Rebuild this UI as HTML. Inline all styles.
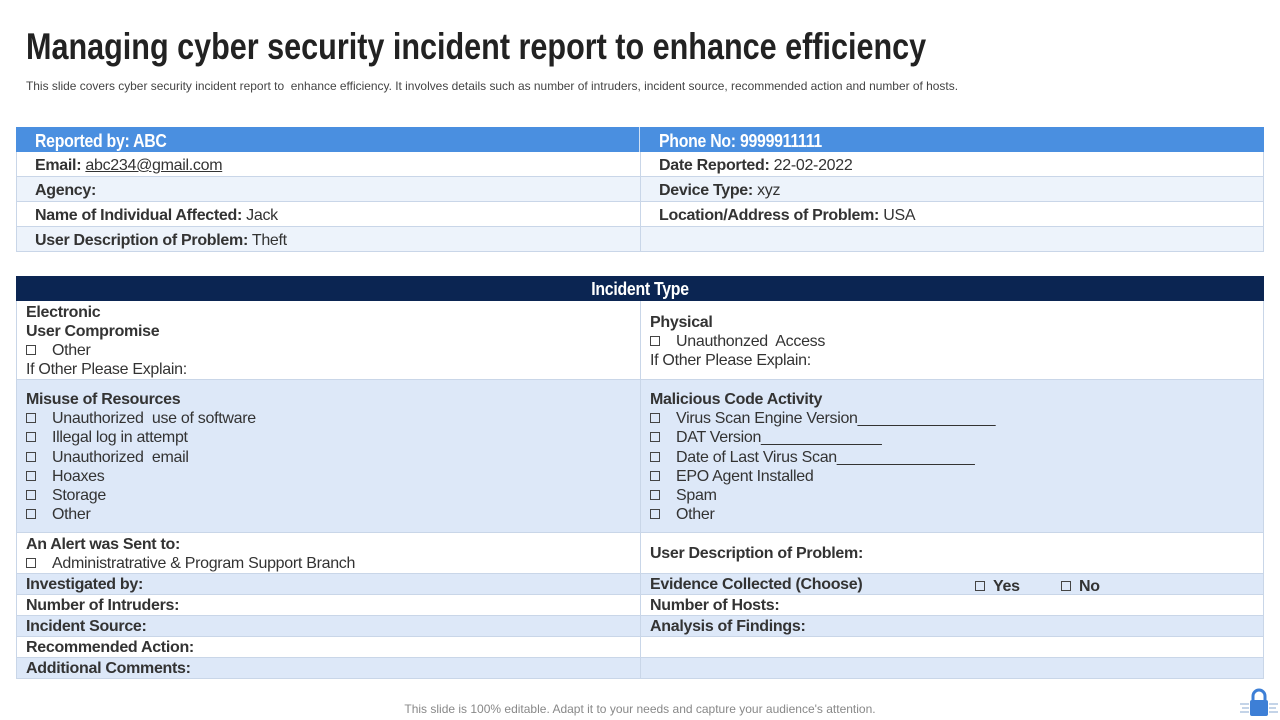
<!DOCTYPE html>
<html><head><meta charset="utf-8"><style>
*{margin:0;padding:0;box-sizing:border-box}
body{width:1280px;height:720px;background:#fff;font-family:"Liberation Sans",sans-serif;color:#333;position:relative;overflow:hidden}
.abs{position:absolute;white-space:nowrap}
h1{position:absolute;left:26px;top:26px;font-size:37px;font-weight:bold;color:#222;transform:scaleX(0.826);transform-origin:left top;white-space:nowrap}
.sub{left:26px;top:79px;font-size:12px;color:#444;transform:scaleX(0.995);transform-origin:left top}
.row{position:absolute;left:16px;width:1248px;border-bottom:1px solid #c9d6e8}
.row:after{content:"";position:absolute;left:624px;top:0;bottom:0;border-left:1px solid #c9d6e8}
.row.nd:after{display:none}
.t{position:absolute;font-size:16px;white-space:nowrap;color:#333;letter-spacing:-0.3px}
b{color:#333}
.w{background:#fff}.l{background:#edf3fb}.m{background:#dde8f8}
.box{display:inline-block;width:10px;height:10px;border:1px solid #444;margin-right:16px;vertical-align:0px}
.line{position:absolute;left:16px;width:1248px;border-left:1px solid #c9d6e8;border-right:1px solid #c9d6e8}
</style></head><body>
<h1>Managing cyber security incident report to enhance efficiency</h1>
<div class="abs sub">This slide covers cyber security incident report to&nbsp; enhance efficiency. It involves details such as number of intruders, incident source, recommended action and number of hosts.</div>

<div class="row nd" style="top:127px;height:25px;background:#4a8fe0;border:none"></div>
<div class="t" style="left:35px;top:131px;color:#fff;font-weight:bold;font-size:18px;transform:scaleX(0.88);transform-origin:left">Reported by: ABC</div>
<div class="t" style="left:659px;top:131px;color:#fff;font-weight:bold;font-size:18px;transform:scaleX(0.88);transform-origin:left">Phone No: 9999911111</div>
<div class="abs" style="left:639px;top:127px;height:25px;border-left:1px solid #cfe0f5"></div>

<div class="row w" style="top:152px;height:25px"></div>
<div class="row l" style="top:177px;height:25px"></div>
<div class="row w" style="top:202px;height:25px"></div>
<div class="row l" style="top:227px;height:25px"></div>
<div class="line" style="top:152px;height:100px"></div>
<div class="t" style="left:35px;top:157px"><b>Email:</b> <u>abc234@gmail.com</u></div>
<div class="t" style="left:659px;top:157px"><b>Date Reported:</b> 22-02-2022</div>
<div class="t" style="left:35px;top:182px"><b>Agency:</b></div>
<div class="t" style="left:659px;top:182px"><b>Device Type:</b> xyz</div>
<div class="t" style="left:35px;top:207px"><b>Name of Individual Affected:</b> Jack</div>
<div class="t" style="left:659px;top:207px"><b>Location/Address of Problem:</b> USA</div>
<div class="t" style="left:35px;top:232px"><b>User Description of Problem:</b> Theft</div>

<div class="row nd" style="top:276px;height:25px;background:#0b2552;border:none"></div>
<div class="t" style="left:0;width:1280px;text-align:center;top:279px;color:#fff;font-weight:bold;font-size:18px;transform:scaleX(0.88)">Incident Type</div>

<div class="row w" style="top:301px;height:79px"></div>
<div class="row m" style="top:380px;height:153px"></div>
<div class="row w" style="top:533px;height:41px"></div>
<div class="row m" style="top:574px;height:21px"></div>
<div class="row w" style="top:595px;height:21px"></div>
<div class="row m" style="top:616px;height:21px"></div>
<div class="row w" style="top:637px;height:21px"></div>
<div class="row m" style="top:658px;height:21px"></div>
<div class="line" style="top:301px;height:378px"></div>

<div class="t" style="left:26px;top:303px;line-height:19px"><b>Electronic<br>User Compromise</b><br><span class="box"></span>Other<br>If Other Please Explain:</div>
<div class="t" style="left:650px;top:313px;line-height:19px"><b>Physical</b><br><span class="box"></span>Unauthonzed&nbsp; Access<br>If Other Please Explain:</div>
<div class="t" style="left:26px;top:390px;line-height:19.2px"><b>Misuse of Resources</b><br><span class="box"></span>Unauthorized&nbsp; use of software<br><span class="box"></span>Illegal log in attempt<br><span class="box"></span>Unauthorized&nbsp; email<br><span class="box"></span>Hoaxes<br><span class="box"></span>Storage<br><span class="box"></span>Other</div>
<div class="t" style="left:650px;top:390px;line-height:19.2px"><b>Malicious Code Activity</b><br><span class="box"></span>Virus Scan Engine Version________________<br><span class="box"></span>DAT Version______________<br><span class="box"></span>Date of Last Virus Scan________________<br><span class="box"></span>EPO Agent Installed<br><span class="box"></span>Spam<br><span class="box"></span>Other</div>
<div class="t" style="left:26px;top:535px;line-height:19px"><b>An Alert was Sent to:</b><br><span class="box"></span>Administratrative &amp; Program Support Branch</div>
<div class="t" style="left:650px;top:545px"><b>User Description of Problem:</b></div>
<div class="t" style="left:26px;top:576px"><b>Investigated by:</b></div>
<div class="t" style="left:650px;top:576px"><b>Evidence Collected (Choose)</b></div>
<div class="t" style="left:975px;top:578px"><span class="box" style="margin-right:8px"></span><b>Yes</b></div>
<div class="t" style="left:1061px;top:578px"><span class="box" style="margin-right:8px"></span><b>No</b></div>
<div class="t" style="left:26px;top:597px"><b>Number of Intruders:</b></div>
<div class="t" style="left:650px;top:597px"><b>Number of Hosts:</b></div>
<div class="t" style="left:26px;top:618px"><b>Incident Source:</b></div>
<div class="t" style="left:650px;top:618px"><b>Analysis of Findings:</b></div>
<div class="t" style="left:26px;top:639px"><b>Recommended Action:</b></div>
<div class="t" style="left:26px;top:660px"><b>Additional Comments:</b></div>

<div class="abs" style="left:0;width:1280px;text-align:center;top:702px;font-size:12px;color:#888">This slide is 100% editable. Adapt it to your needs and capture your audience's attention.</div>
<svg class="abs" style="left:1238px;top:688px" width="42" height="30" viewBox="0 0 42 30">
<path d="M15 12V8a6 6 0 0 1 12 0v4" fill="none" stroke="#3d7fd6" stroke-width="3"/>
<rect x="12" y="12" width="18" height="16" rx="2" fill="#3d7fd6"/>
<g stroke="#8aa8d0" stroke-width="1"><path d="M2 16h9M4 20h7M2 24h9M31 16h9M31 20h7M31 24h9"/></g>
</svg>
</body></html>
